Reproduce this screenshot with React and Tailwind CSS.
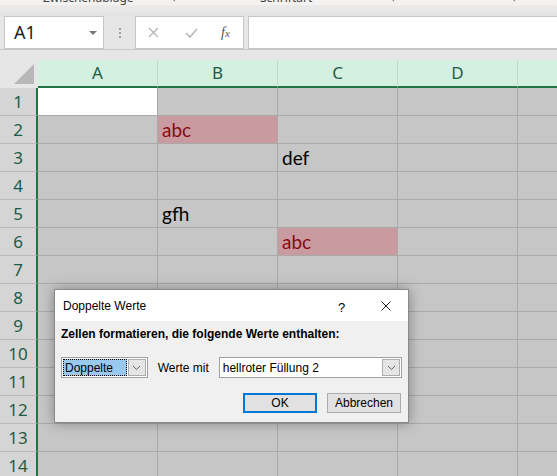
import React from 'react';

const cols = ['A', 'B', 'C', 'D', 'E'];
const rows = [1, 2, 3, 4, 5, 6, 7, 8, 9, 10, 11, 12, 13, 14];

// cell contents: [row, col] -> { text, red }
const cells = {
  '2-B': { text: 'abc', red: true },
  '3-C': { text: 'def' },
  '5-B': { text: 'gfh' },
  '6-C': { text: 'abc', red: true },
};

function Chevron() {
  return (
    <svg width="9" height="6" viewBox="0 0 9 6">
      <path d="M1 1 L4.5 4.5 L8 1" fill="none" stroke="#606060" strokeWidth="1" />
    </svg>
  );
}

function Cell({ r, c }) {
  const data = cells[`${r}-${c}`];
  let bg = 'bg-[#c6c6c6]';
  if (r === 1 && c === 'A') bg = 'bg-white';
  if (data && data.red) bg = 'bg-[#c99aa0]';
  return (
    <div
      className={`w-[120px] shrink-0 h-full border-r border-b border-[#a9a9a9] ${bg} flex items-end pl-[4px] pb-[1px] text-[19px] leading-[24px] ${
        data && data.red ? 'text-[#8a0a10]' : 'text-black'
      }`}
      style={{ fontFamily: 'Lato, "Open Sans", sans-serif' }}
    >
      {data ? data.text : ''}
    </div>
  );
}

export default function App() {
  return (
    <div
      className="w-[557px] h-[476px] overflow-hidden relative bg-[#e6e6e6]"
      style={{ fontFamily: '"Noto Sans", "Open Sans", sans-serif' }}
    >
      {/* ribbon remains */}
      <div className="h-[5px] overflow-hidden bg-[#f3f2f1] relative">
        <div className="flex text-[12px] leading-[12px] text-[#444] -mt-[8px]">
          <span className="ml-[43px] w-[130px]">Zwischenablage</span>
          <span className="w-[87px]">⌐</span>
          <span className="w-[132px]">Schriftart</span>
          <span className="w-[121px]">⌐</span>
          <span>⌐</span>
        </div>
      </div>
      <div className="h-[11px] bg-gradient-to-b from-[#ecebea] to-[#e3e3e3]" />

      {/* formula bar */}
      <div className="h-[34px] flex items-stretch border-b border-[#c8c8c8]">
        <div className="ml-[4px] w-[100px] bg-white border border-[#c6c6c6] flex items-center justify-between pl-[9px] pr-[6px]">
          <span className="text-[18px] text-[#222]">A1</span>
          <svg width="8" height="4" viewBox="0 0 8 4">
            <path d="M0 0 L8 0 L4 4 Z" fill="#7a7a7a" />
          </svg>
        </div>
        <div className="w-[31px] flex flex-col items-center justify-center gap-[2px]">
          <span className="w-[2px] h-[2px] bg-[#a0a0a0]" />
          <span className="w-[2px] h-[2px] bg-[#a0a0a0]" />
          <span className="w-[2px] h-[2px] bg-[#a0a0a0]" />
        </div>
        <div className="w-[109px] bg-white border border-[#c6c6c6] flex items-center">
          <svg className="ml-[12px]" width="11" height="11" viewBox="0 0 11 11">
            <path d="M1 1 L10 10 M10 1 L1 10" stroke="#b4b4b4" strokeWidth="1.3" />
          </svg>
          <svg className="ml-[26px]" width="13" height="10" viewBox="0 0 13 10">
            <path d="M1 5 L5 9 L12 1" fill="none" stroke="#b4b4b4" strokeWidth="1.5" />
          </svg>
          <span
            className="ml-[23px] text-[14px] italic text-[#555]"
            style={{ fontFamily: '"Liberation Serif", serif' }}
          >
            f<span className="text-[11px]">x</span>
          </span>
        </div>
        <div className="ml-[4px] flex-1 bg-white border-y border-l border-[#c6c6c6]" />
      </div>

      <div className="h-[10px]" />

      {/* column headers */}
      <div className="flex h-[28px]">
        <div className="w-[38px] shrink-0 relative border-b-2 border-[#e6e6e6]">
          <svg className="absolute left-[14px] top-[4px]" width="20" height="20" viewBox="0 0 20 20">
            <path d="M20 0 L20 20 L0 20 Z" fill="#b8b8b8" />
          </svg>
        </div>
        {cols.map((c) => (
          <div
            key={c}
            className="w-[120px] shrink-0 bg-[#d3f0e0] border-r border-[#c4d6cc] border-b-2 border-b-[#217346] flex items-center justify-center text-[17px] text-[#1e5b45]"
          >
            {c}
          </div>
        ))}
      </div>

      {/* rows */}
      {rows.map((r) => (
        <div key={r} className="flex h-[28px]">
          <div className="w-[38px] shrink-0 bg-[#d5d5d5] border-r-2 border-r-[#217346] border-b border-b-[#b9b9b9] flex items-center justify-center text-[17px] text-[#1e5b45]">
            {r}
          </div>
          {cols.map((c) => (
            <Cell key={c} r={r} c={c} />
          ))}
        </div>
      ))}

      {/* dialog */}
      <div
        className="absolute left-[54px] top-[289px] w-[355px] h-[134px] border border-[#8a8a8a] bg-[#f0f0f0] shadow-[0_0_12px_rgba(0,0,0,0.35)] text-[12px] text-black"
        style={{ fontFamily: '"Liberation Sans", Arial, sans-serif' }}
      >
        <div className="h-[31px] bg-white flex items-center pl-[8px] relative">
          <span>Doppelte Werte</span>
          <span className="absolute left-[283px] top-[8px] text-[13px]">?</span>
          <svg className="absolute left-[326px] top-[11px]" width="10" height="10" viewBox="0 0 10 10">
            <path d="M0.5 0.5 L9.5 9.5 M9.5 0.5 L0.5 9.5" stroke="#222" strokeWidth="1" />
          </svg>
        </div>
        <div className="px-[6px]">
          <div className="mt-[5px] font-bold leading-[16px] whitespace-nowrap">
            Zellen formatieren, die folgende Werte enthalten:
          </div>
          <div className="mt-[15px] flex items-center h-[21px]">
            <div className="w-[87px] h-[21px] border border-[#a0a0a0] bg-white p-[1px] flex">
              <div className="flex-1 bg-[#99c9ef] border border-dotted border-black flex items-center pl-[1px] leading-[14px]">
                Doppelte
              </div>
              <div className="w-[18px] ml-[1px] bg-[#e5e5e5] border border-[#adadad] flex items-center justify-center">
                <Chevron />
              </div>
            </div>
            <span className="ml-[10px] whitespace-nowrap">Werte mit</span>
            <div className="ml-[10px] w-[184px] h-[21px] border border-[#a0a0a0] bg-white flex items-center">
              <span className="flex-1 pl-[3px] whitespace-nowrap">hellroter Füllung 2</span>
              <div className="w-[18px] h-[17px] mr-[1px] bg-[#e5e5e5] border border-[#adadad] flex items-center justify-center">
                <Chevron />
              </div>
            </div>
          </div>
          <div className="mt-[15px] flex">
            <div className="ml-[182px] w-[74px] h-[20px] border-2 border-[#0078d7] bg-[#e1e1e1] flex items-center justify-center">
              OK
            </div>
            <div className="ml-[10px] w-[74px] h-[20px] border border-[#adadad] bg-[#e1e1e1] flex items-center justify-center">
              Abbrechen
            </div>
          </div>
        </div>
      </div>
    </div>
  );
}
